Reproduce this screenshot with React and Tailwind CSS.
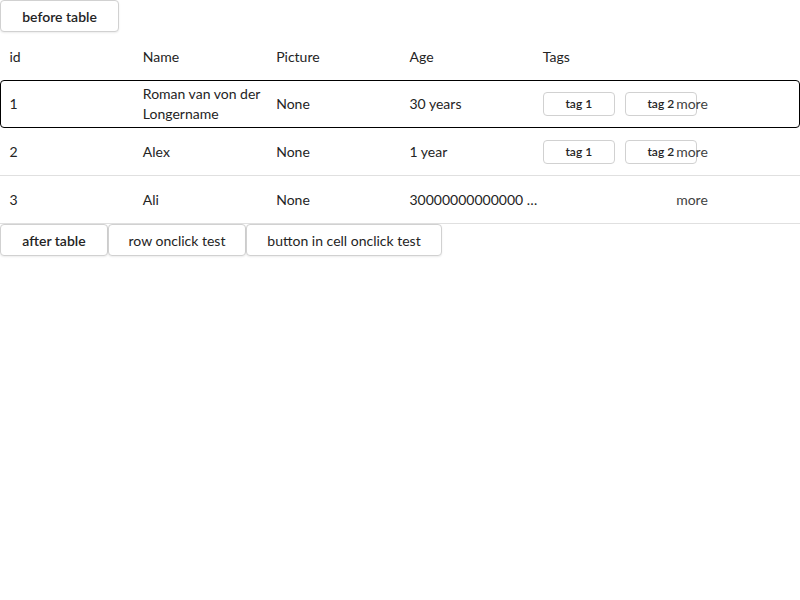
import React from 'react';

const rows = [
  { id: '1', name: 'Roman van von der Longername', picture: 'None', age: '30 years', tags: ['tag 1', 'tag 2'], focused: true },
  { id: '2', name: 'Alex', picture: 'None', age: '1 year', tags: ['tag 1', 'tag 2'] },
  { id: '3', name: 'Ali', picture: 'None', age: '30000000000000 …', tags: [] },
];

const font = { fontFamily: 'Lato, "Open Sans", sans-serif' };

function Btn({ children, bold, w }) {
  return (
    <button
      type="button"
      className={`h-[32px] ${w} bg-white border border-[#d1d1d1] rounded-[4px] text-[14px] text-[#242424] shadow-[0_1px_2px_rgba(0,0,0,0.08)] ${bold ? 'font-semibold' : 'font-normal'}`}
    >
      {children}
    </button>
  );
}

export default function App() {
  return (
    <div className="w-[800px] h-[600px] bg-white text-[#242424] text-[14px]" style={font}>
      <Btn bold w="w-[119px]">before table</Btn>

      <div className="grid grid-cols-6 h-[48px] items-center pt-[2px]">
        {['id', 'Name', 'Picture', 'Age', 'Tags', ''].map((h, i) => (
          <div key={i} className="pl-[9.5px] leading-[20px]">{h}</div>
        ))}
      </div>

      {rows.map((r) => (
        <div
          key={r.id}
          className={`grid grid-cols-6 h-[48px] items-center ${r.focused ? 'outline outline-1 outline-black -outline-offset-1 rounded-[4px]' : 'border-b border-[#e0e0e0]'}`}
        >
          <div className="pl-[9.5px] leading-[20px]">{r.id}</div>
          <div className="pl-[9.5px] leading-[20px]">{r.name}</div>
          <div className="pl-[9.5px] leading-[20px]">{r.picture}</div>
          <div className="pl-[9.5px] leading-[20px] whitespace-nowrap">{r.age}</div>
          <div className="pl-[9.5px] flex gap-[10px] whitespace-nowrap">
            {r.tags.map((t) => (
              <span key={t} className="shrink-0 w-[72px] h-[24px] flex items-center justify-center bg-white border border-[#d1d1d1] rounded-[4px] text-[12px] font-semibold">
                {t}
              </span>
            ))}
          </div>
          <div className="pl-[9.5px] leading-[20px] text-[#424242] relative">more</div>
        </div>
      ))}

      <div className="flex">
        <Btn bold w="w-[108px]">after table</Btn>
        <Btn w="w-[138px]">row onclick test</Btn>
        <Btn w="w-[196px]">button in cell onclick test</Btn>
      </div>
    </div>
  );
}
